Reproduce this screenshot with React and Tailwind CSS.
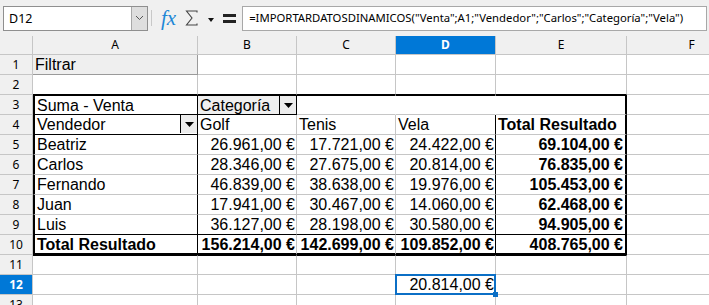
import React from "react";

const COLS = ["A", "B", "C", "D", "E", "F"];

// base cell: gridlines on right and bottom, content sits inside a 20px box
const base =
  "h-5 border-r border-b border-[#c6c6c6] px-[2px] leading-[20px] text-[16px] whitespace-nowrap overflow-hidden text-black";

function DropBtn() {
  return (
    <span className="ml-auto flex h-[18px] w-[17px] shrink-0 items-center justify-center border-l border-black bg-[#ececec]">
      <svg width="9" height="5" viewBox="0 0 9 5">
        <path d="M0 0 H9 L4.5 5 Z" fill="#000" />
      </svg>
    </span>
  );
}

const rows = [
  // row 1
  [
    { t: "Filtrar", c: "bg-[#efefef] border-r-[#9a9a9a] border-b-[#9a9a9a]" },
    {}, {}, {}, {}, {},
  ],
  // row 2
  [
    { c: "border-b-black" },
    { c: "border-b-black" },
    { c: "border-b-black" },
    { c: "border-b-black" },
    { c: "border-b-black" },
    {},
  ],
  // row 3
  [
    { t: "Suma - Venta", c: "border-t border-l-2 border-t-black border-l-black border-r-black border-b-black" },
    { t: "Categoría", btn: true, c: "flex pr-0 bg-[#efefef] border-t border-t-black border-r-black border-b-black" },
    { c: "border-t border-t-black border-r-white" },
    { c: "border-t border-t-black border-r-white" },
    { c: "border-t border-t-black border-r-2 border-r-black" },
    {},
  ],
  // row 4
  [
    { t: "Vendedor", btn: true, c: "flex pr-0 border-l-2 border-l-black border-r-black border-b-black" },
    { t: "Golf" },
    { t: "Tenis" },
    { t: "Vela", c: "border-r-black" },
    { t: "Total Resultado", c: "font-bold border-r-2 border-r-black" },
    {},
  ],
];

const data = [
  ["Beatriz", "26.961,00 €", "17.721,00 €", "24.422,00 €", "69.104,00 €"],
  ["Carlos", "28.346,00 €", "27.675,00 €", "20.814,00 €", "76.835,00 €"],
  ["Fernando", "46.839,00 €", "38.638,00 €", "19.976,00 €", "105.453,00 €"],
  ["Juan", "17.941,00 €", "30.467,00 €", "14.060,00 €", "62.468,00 €"],
  ["Luis", "36.127,00 €", "28.198,00 €", "30.580,00 €", "94.905,00 €"],
];

data.forEach((d, i) => {
  const last = i === data.length - 1 ? " border-b-black" : "";
  rows.push([
    { t: d[0], c: "border-l-2 border-l-black border-r-black" + last },
    { t: d[1], c: "text-right pr-[1px]" + last },
    { t: d[2], c: "text-right pr-[1px]" + last },
    { t: d[3], c: "text-right pr-[1px] border-r-black" + last },
    { t: d[4], c: "text-right pr-[2px] font-bold border-r-2 border-r-black" + last },
    {},
  ]);
});

// row 10
rows.push([
  { t: "Total Resultado", c: "font-bold border-l-2 border-l-black border-r-black border-b-2 border-b-black" },
  { t: "156.214,00 €", c: "font-bold text-right pr-[1px] border-b-2 border-b-black" },
  { t: "142.699,00 €", c: "font-bold text-right pr-[1px] border-b-2 border-b-black" },
  { t: "109.852,00 €", c: "font-bold text-right pr-[1px] border-r-black border-b-2 border-b-black" },
  { t: "408.765,00 €", c: "font-bold text-right pr-[2px] border-r-2 border-r-black border-b-2 border-b-black" },
  {},
]);

// row 11
rows.push([
  { c: "border-t border-t-black" },
  { c: "border-t border-t-black" },
  { c: "border-t border-t-black" },
  { c: "border-t border-t-black" },
  { c: "border-t border-t-black" },
  {},
]);

// row 12 with the selected cell
rows.push([
  {}, {}, {},
  { t: "20.814,00 €", sel: true, c: "relative text-right pr-[1px] overflow-visible" },
  {}, {},
]);

// row 13
rows.push([{}, {}, {}, {}, {}, {}]);

export default function App() {
  return (
    <div className="h-[305px] w-[709px] overflow-hidden bg-white font-['Liberation_Sans',Arial,sans-serif]">
      {/* Formula bar */}
      <div className="flex h-9 items-center bg-[#f0f0f0] font-['Noto_Sans',sans-serif]">
        <div className="ml-[3px] flex h-[25px] w-[145px] border border-[#8f8f8f] bg-white">
          <span className="flex-1 pl-[5px] text-[12.5px] leading-[23px] text-black">D12</span>
          <span className="flex w-[16px] items-center justify-center border-l border-[#a8a8a8] bg-[#dedede]">
            <svg width="9" height="6" viewBox="0 0 9 6">
              <path d="M1 1 L4.5 4.5 L8 1" fill="none" stroke="#555" strokeWidth="1" />
            </svg>
          </span>
        </div>
        <div className="ml-[3px] h-[16px] w-px bg-[#c8c8c8]" />
        <span className="ml-[9px] font-['Liberation_Serif',serif] text-[21px] italic leading-none text-[#1d87d6]">fx</span>
        <svg className="ml-[9px]" width="13" height="16" viewBox="0 0 13 16">
          <path d="M12 2.5 V1 H1.5 L7 8 L1.5 15 H12 V13.5" fill="none" stroke="#444" strokeWidth="1.1" />
        </svg>
        <svg className="ml-[10px] mt-[4px]" width="6" height="4" viewBox="0 0 6 4">
          <path d="M0 0 H6 L3 4 Z" fill="#111" />
        </svg>
        <div className="ml-[9px] flex flex-col gap-[3px]">
          <div className="h-[3px] w-[13px] bg-[#222]" />
          <div className="h-[3px] w-[13px] bg-[#222]" />
        </div>
        <div className="ml-[6px] flex h-[25px] w-[465px] items-center border border-[#a8a8a8] bg-white pl-[6px]">
          <span className="whitespace-nowrap text-[11.3px] text-black">
            =IMPORTARDATOSDINAMICOS("Venta";A1;"Vendedor";"Carlos";"Categoría";"Vela")
          </span>
        </div>
      </div>

      {/* Sheet */}
      <div className="grid grid-cols-[33px_165px_99px_99px_100px_131px_130px]">
        {/* column headers */}
        <div className="h-[19px] border-r border-b border-[#c6c6c6] bg-[#f0f0f0]" />
        {COLS.map((c) => (
          <div
            key={c}
            className={
              c === "D"
                ? "h-[19px] border-r border-b border-[#c6c6c6] bg-[#0078d7] text-center font-['Noto_Sans',sans-serif] text-[12px] font-bold leading-[18px] text-white"
                : "h-[19px] border-r border-b border-[#c6c6c6] bg-[#f0f0f0] text-center font-['Noto_Sans',sans-serif] text-[12px] leading-[18px] text-black"
            }
          >
            {c}
          </div>
        ))}

        {rows.map((row, r) => (
          <React.Fragment key={r}>
            <div
              className={
                r === 11
                  ? "h-5 border-r border-b border-[#c6c6c6] bg-[#0078d7] text-center font-['Noto_Sans',sans-serif] text-[12px] font-bold leading-[19px] text-white"
                  : "h-5 border-r border-b border-[#c6c6c6] bg-[#f0f0f0] text-center font-['Noto_Sans',sans-serif] text-[12px] leading-[19px] text-black"
              }
            >
              {r + 1}
            </div>
            {row.map((cell, ci) => (
              <div key={ci} className={base + " " + (cell.c || "")}>
                {cell.btn ? (
                  <>
                    <span>{cell.t}</span>
                    <DropBtn />
                  </>
                ) : (
                  cell.t
                )}
                {cell.sel && (
                  <>
                    <span className="pointer-events-none absolute -top-px -left-px -right-px -bottom-px border-2 border-[#0b6fc6]" />
                    <span className="absolute -right-[3px] -bottom-[3px] h-[5px] w-[5px] bg-[#0b6fc6]" />
                  </>
                )}
              </div>
            ))}
          </React.Fragment>
        ))}
      </div>
    </div>
  );
}
